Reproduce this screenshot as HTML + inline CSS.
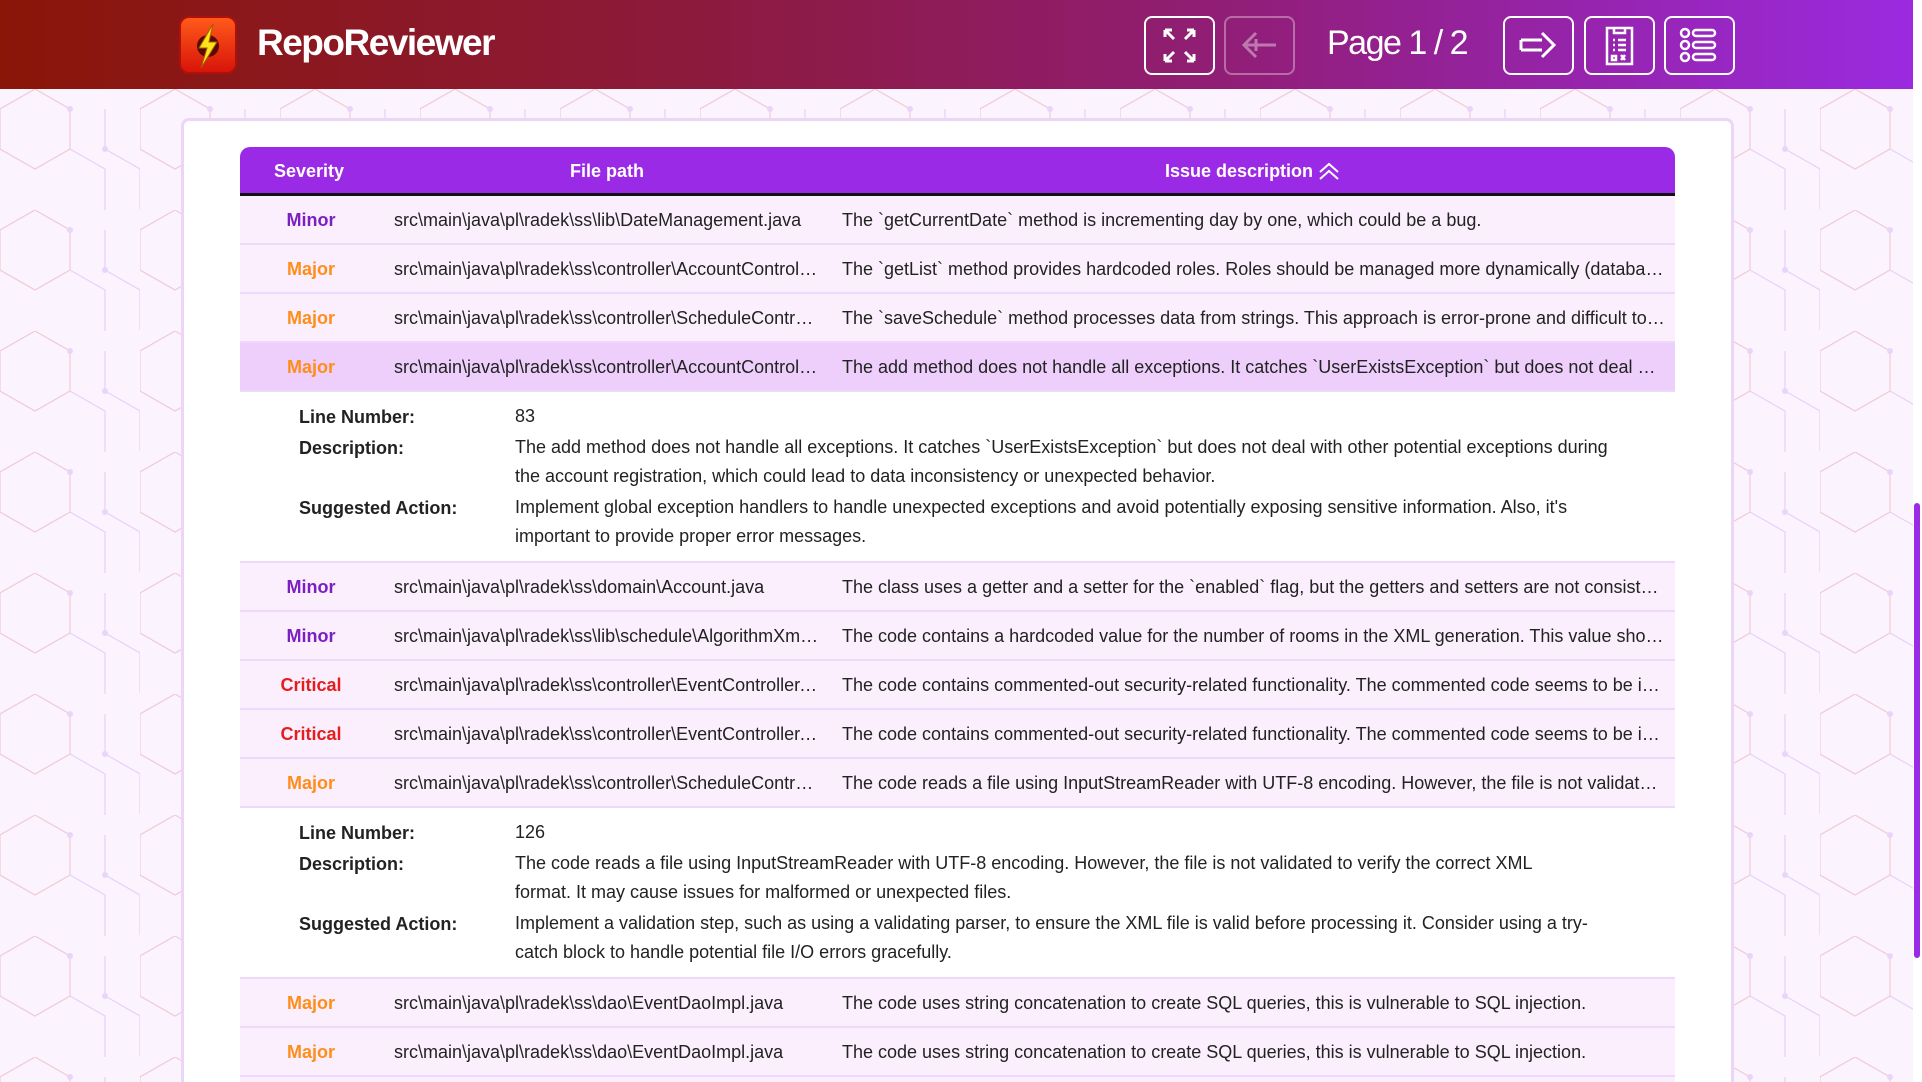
<!DOCTYPE html>
<html><head><meta charset="utf-8"><style>
*{box-sizing:border-box;margin:0;padding:0}
html,body{width:1922px;height:1082px;overflow:hidden}
body{background:#fff;font-family:"Liberation Sans",sans-serif;position:relative}
.bg{position:absolute;left:0;top:89px;width:1913px;height:993px;background:#fbf3fe;overflow:hidden}
.hdr{position:absolute;left:0;top:0;width:1913px;height:89px;background:linear-gradient(90deg,#8a1608 0%,#8c1a3a 35%,#911e78 65%,#9b2ae0 100%)}
.logo{position:absolute;left:179px;top:16px;width:58px;height:58px;border-radius:10px;background:linear-gradient(180deg,#ff5a1a,#d8140a);border:2px solid #b0100a}
.title{position:absolute;left:257px;top:22px;color:#fff;font-size:37px;font-weight:bold;letter-spacing:-1.5px}
.btn{position:absolute;top:16px;width:71px;height:59px;border:2px solid #fff;border-radius:8px}
.btn.dis{border-color:rgba(255,255,255,.35)}
.page{position:absolute;left:1327px;top:24px;color:#fff;font-size:34px;letter-spacing:-1.5px}
.wrap{position:absolute;left:0;top:0;width:1922px;height:1082px;overflow:hidden}
.card{position:absolute;left:181px;top:118px;width:1553px;height:1000px;background:#fff;border:3px solid #ecd6f8;border-radius:8px}
.tbl{position:absolute;left:240px;top:147px;width:1435px}
.th{height:49px;background:#9b2ae6;border-radius:10px 10px 0 0;border-bottom:3px solid #111;color:#fff;font-weight:bold;font-size:18px;position:relative}
.th span{position:absolute;top:14px}
.row{height:49px;background:#fbeffd;border-bottom:2px solid #efd9fb;position:relative;font-size:18px;color:#222;white-space:nowrap}
.row.hl{background:#eecffc}
.row div{position:absolute;top:14px;overflow:hidden;text-overflow:ellipsis}
.sev{left:0;width:142px;text-align:center;font-weight:bold}
.fp{left:154px;width:425px}
.ds{left:602px;width:823px}
.mi{color:#7a1fc4}.ma{color:#ff8d1a}.cr{color:#e41e1e}
.det{height:171px;background:#fff;position:relative;font-size:18px;color:#222;border-bottom:2px solid #efd9fb}
.det .l{position:absolute;left:59px;font-weight:bold}
.det .v{position:absolute;left:275px;width:1110px;line-height:29px}
.sb{position:absolute;left:1914px;top:503px;width:6px;height:455px;background:#9b2ae6;border-radius:3px}
</style></head><body>
<div class="wrap">
<div class="bg"><svg width="1913" height="993">
<defs><pattern id="h" width="140" height="121" patternUnits="userSpaceOnUse">
<path d="M35 0 L70 20 L70 60 L35 80 L0 60 L0 20 Z" fill="none" stroke="#f0c0c8" stroke-width="1.2"/>
<path d="M105 60 L140 80 L140 120 M105 60 L105 20 M70 60 L105 80 L105 121" fill="none" stroke="#e2c8f6" stroke-width="1.2"/>
<circle cx="105" cy="60" r="3" fill="#e5cdf8"/><circle cx="70" cy="20" r="3" fill="#e5cdf8"/>
</pattern></defs>
<rect width="1913" height="993" fill="url(#h)" opacity=".8"/></svg></div>
<div class="hdr">
<div class="logo"><svg width="54" height="54" viewBox="0 0 54 54"><circle cx="27" cy="28" r="11" fill="#5a0a06"/><path d="M32 6 L18 30 L26 30 L20 50 L36 24 L28 24 Z" fill="#ffe21a" stroke="#a06000" stroke-width="1"/></svg></div>
<div class="title">RepoReviewer</div>
<div class="btn" style="left:1144px"><svg width="67" height="55" viewBox="0 0 67 55" fill="none" stroke="#fff" stroke-width="3"><path d="M19 12 L28 21 M19 12 h7 M19 12 v7 M48 12 L39 21 M48 12 h-7 M48 12 v7 M19 43 L28 34 M19 43 h7 M19 43 v-7 M48 43 L39 34 M48 43 h-7 M48 43 v-7"/></svg></div>
<div class="btn dis" style="left:1224px"><svg width="67" height="55" viewBox="0 0 67 55" fill="none" stroke="rgba(255,255,255,.4)" stroke-width="3"><path d="M30 15 L18 27 L30 39 M18 27 H50 M30 21 V33"/></svg></div>
<div class="page">Page 1 / 2</div>
<div class="btn" style="left:1503px"><svg width="67" height="55" viewBox="0 0 67 55" fill="none" stroke="#fff" stroke-width="3"><path d="M37 15 L49 27 L37 39 M16 22 H37 M16 32 H37 M16 22 V32"/></svg></div>
<div class="btn" style="left:1584px"><svg width="67" height="55" viewBox="0 0 67 55" fill="none" stroke="#fff" stroke-width="2.5"><rect x="21" y="10" width="25" height="36"/><path d="M28 10 V15 H39 V10 M27 22 H29 M32 22 H40 M27 27 H29 M32 27 H40 M27 32 H29 M32 32 H40 M26 38 h4 v4 h-4z M35 37 l4 5 M39 37 l-4 5"/></svg></div>
<div class="btn" style="left:1664px"><svg width="67" height="55" viewBox="0 0 67 55" fill="none" stroke="#fff" stroke-width="2.5"><circle cx="19" cy="15" r="4"/><circle cx="19" cy="27" r="4"/><circle cx="19" cy="39" r="4"/><rect x="27" y="12" width="22" height="6" rx="3"/><rect x="27" y="24" width="22" height="6" rx="3"/><rect x="27" y="36" width="22" height="6" rx="3"/></svg></div>
</div>
<div class="card"></div>
<div class="tbl">
<div class="th"><span style="left:34px">Severity</span><span style="left:330px">File path</span><span style="left:925px">Issue description <svg width="22" height="18" viewBox="0 0 22 18" fill="none" stroke="#fff" stroke-width="2" style="vertical-align:-3px"><path d="M2 10 L11 2 L20 10 M2 17 L11 9 L20 17"/></svg></span></div>
<div class="row"><div class="sev mi">Minor</div><div class="fp">src\main\java\pl\radek\ss\lib\DateManagement.java</div><div class="ds">The `getCurrentDate` method is incrementing day by one, which could be a bug.</div></div>
<div class="row"><div class="sev ma">Major</div><div class="fp">src\main\java\pl\radek\ss\controller\AccountController.java</div><div class="ds">The `getList` method provides hardcoded roles. Roles should be managed more dynamically (database).</div></div>
<div class="row"><div class="sev ma">Major</div><div class="fp">src\main\java\pl\radek\ss\controller\ScheduleController.java</div><div class="ds">The `saveSchedule` method processes data from strings. This approach is error-prone and difficult to maintain.</div></div>
<div class="row hl"><div class="sev ma">Major</div><div class="fp">src\main\java\pl\radek\ss\controller\AccountController.java</div><div class="ds">The add method does not handle all exceptions. It catches `UserExistsException` but does not deal with others.</div></div>
<div class="det">
<div class="l" style="top:15px">Line Number:</div><div class="v" style="top:10px">83</div>
<div class="l" style="top:46px">Description:</div><div class="v" style="top:41px">The add method does not handle all exceptions. It catches `UserExistsException` but does not deal with other potential exceptions during the account registration, which could lead to data inconsistency or unexpected behavior.</div>
<div class="l" style="top:106px">Suggested Action:</div><div class="v" style="top:101px">Implement global exception handlers to handle unexpected exceptions and avoid potentially exposing sensitive information. Also, it's important to provide proper error messages.</div>
</div>
<div class="row"><div class="sev mi">Minor</div><div class="fp">src\main\java\pl\radek\ss\domain\Account.java</div><div class="ds">The class uses a getter and a setter for the `enabled` flag, but the getters and setters are not consistent.</div></div>
<div class="row"><div class="sev mi">Minor</div><div class="fp">src\main\java\pl\radek\ss\lib\schedule\AlgorithmXml.java</div><div class="ds">The code contains a hardcoded value for the number of rooms in the XML generation. This value should be configurable.</div></div>
<div class="row"><div class="sev cr">Critical</div><div class="fp">src\main\java\pl\radek\ss\controller\EventController.java</div><div class="ds">The code contains commented-out security-related functionality. The commented code seems to be important.</div></div>
<div class="row"><div class="sev cr">Critical</div><div class="fp">src\main\java\pl\radek\ss\controller\EventController.java</div><div class="ds">The code contains commented-out security-related functionality. The commented code seems to be important.</div></div>
<div class="row"><div class="sev ma">Major</div><div class="fp">src\main\java\pl\radek\ss\controller\ScheduleController.java</div><div class="ds">The code reads a file using InputStreamReader with UTF-8 encoding. However, the file is not validated to verify.</div></div>
<div class="det">
<div class="l" style="top:15px">Line Number:</div><div class="v" style="top:10px">126</div>
<div class="l" style="top:46px">Description:</div><div class="v" style="top:41px;width:1070px">The code reads a file using InputStreamReader with UTF-8 encoding. However, the file is not validated to verify the correct XML format. It may cause issues for malformed or unexpected files.</div>
<div class="l" style="top:106px">Suggested Action:</div><div class="v" style="top:101px;width:1080px">Implement a validation step, such as using a validating parser, to ensure the XML file is valid before processing it. Consider using a try-catch block to handle potential file I/O errors gracefully.</div>
</div>
<div class="row"><div class="sev ma">Major</div><div class="fp">src\main\java\pl\radek\ss\dao\EventDaoImpl.java</div><div class="ds">The code uses string concatenation to create SQL queries, this is vulnerable to SQL injection.</div></div>
<div class="row"><div class="sev ma">Major</div><div class="fp">src\main\java\pl\radek\ss\dao\EventDaoImpl.java</div><div class="ds">The code uses string concatenation to create SQL queries, this is vulnerable to SQL injection.</div></div>
<div class="row"></div>
</div>
<div class="sb"></div>
</div>
</body></html>
